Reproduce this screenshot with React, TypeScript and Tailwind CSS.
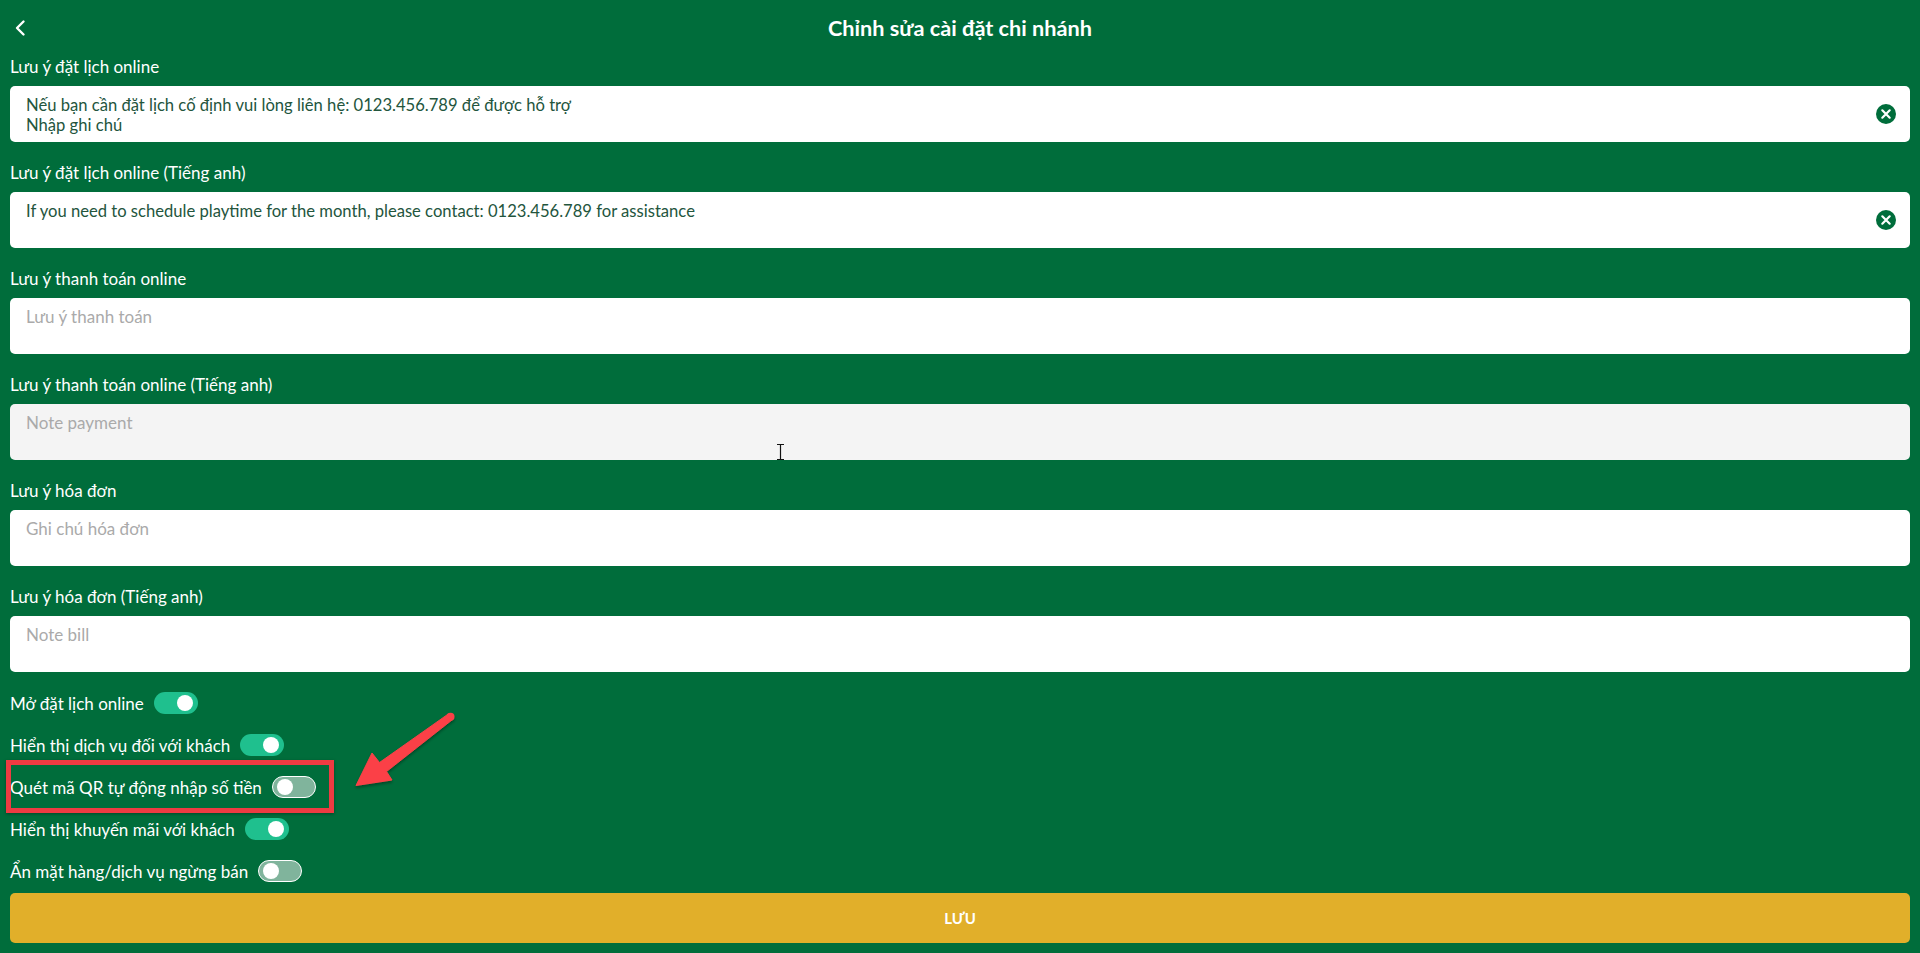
const fields: { label: string; value?: string[]; placeholder?: string; disabled?: boolean }[] = [
  { label: "Lưu ý đặt lịch online", value: ["Nếu bạn cần đặt lịch cố định vui lòng liên hệ: 0123.456.789 để được hỗ trợ", "Nhập ghi chú"] },
  { label: "Lưu ý đặt lịch online (Tiếng anh)", value: ["If you need to schedule playtime for the month, please contact: 0123.456.789 for assistance"] },
  { label: "Lưu ý thanh toán online", placeholder: "Lưu ý thanh toán" },
  { label: "Lưu ý thanh toán online (Tiếng anh)", placeholder: "Note payment", disabled: true },
  { label: "Lưu ý hóa đơn", placeholder: "Ghi chú hóa đơn" },
  { label: "Lưu ý hóa đơn (Tiếng anh)", placeholder: "Note bill" },
];

const toggles = [
  { label: "Mở đặt lịch online", on: true },
  { label: "Hiển thị dịch vụ đối với khách", on: true },
  { label: "Quét mã QR tự động nhập số tiền", on: false },
  { label: "Hiển thị khuyến mãi với khách", on: true },
  { label: "Ẩn mặt hàng/dịch vụ ngừng bán", on: false },
];

function Switch({ on }: { on: boolean }) {
  return on ? (
    <div className="flex h-[22px] w-[44px] shrink-0 items-center justify-end rounded-full bg-[#1fc08e] pr-[5px]">
      <div className="h-[16px] w-[16px] rounded-full bg-white" />
    </div>
  ) : (
    <div className="flex h-[22px] w-[44px] shrink-0 items-center justify-start rounded-full border border-white bg-[#80b49c] pl-[4px]">
      <div className="h-[16px] w-[16px] rounded-full bg-white" />
    </div>
  );
}

function Field({ label, value, placeholder, disabled }: (typeof fields)[number]) {
  return (
    <div className="flex flex-col gap-[10px]">
      <div className="h-[20px] pt-px text-[17px] leading-[20px] text-white">{label}</div>
      <div className={`relative h-[56px] rounded-[5px] px-[16px] pt-[9px] leading-[20px] ${disabled ? "bg-[#f4f4f4]" : "bg-white"}`}>
        {value ? (
          value.map((line) => (
            <div key={line} className="text-[16.600px] text-[#23553d]">{line}</div>
          ))
        ) : (
          <div className="text-[17px] text-[#aaaaaa]">{placeholder}</div>
        )}
        {value && (
          <svg className="absolute right-[14px] top-[18px]" width="20" height="20" viewBox="0 0 20 20">
            <circle cx="10" cy="10" r="10" fill="#006d3b" />
            <path d="M6.300 6.300l7.400 7.400M13.700 6.300l-7.400 7.400" stroke="#fff" strokeWidth="2.200" strokeLinecap="round" />
          </svg>
        )}
      </div>
    </div>
  );
}

export default function App() {
  return (
    <div className="relative h-[953px] w-full overflow-hidden bg-[#006d3b] px-[10px] font-['Lato','Noto_Sans',sans-serif]">
      <header className="relative flex h-[56px] items-center justify-center">
        <svg className="absolute left-[2px] top-[18px]" width="16" height="20" viewBox="0 0 16 20" fill="none">
          <path d="M11.500 3.500L5 10l6.500 6.500" stroke="#fff" strokeWidth="2.400" strokeLinecap="round" strokeLinejoin="round" />
        </svg>
        <h1 className="text-[21.700px] font-bold text-white">Chỉnh sửa cài đặt chi nhánh</h1>
      </header>

      <div className="flex flex-col gap-[20px]">
        {fields.map((f) => (
          <Field key={f.label} {...f} />
        ))}
      </div>

      <div className="mt-[10px] flex flex-col">
        {toggles.map((t) => (
          <div key={t.label} className="flex h-[42px] items-center gap-[10px] text-[17px] text-white">
            <span className="mt-[2px]">{t.label}</span>
            <Switch on={t.on} />
          </div>
        ))}
      </div>

      <button className="mt-px h-[50px] w-full rounded-[5px] bg-[#e1af2a] text-[15px] font-bold text-white">LƯU</button>

      {/* I-beam cursor */}
      <svg className="absolute left-[776px] top-[443px]" width="9" height="18" viewBox="0 0 9 18" fill="none">
        <path d="M1 1.500h7M4.500 1.500v15M1 16.500h7" stroke="#111" strokeWidth="1.200" />
      </svg>

      {/* Annotation box */}
      <div className="pointer-events-none absolute left-[6px] top-[760px] h-[53px] w-[328px] border-[5px] border-[#ee3b42] shadow-[0_1px_3px_rgba(0,0,0,0.35)]" />

      {/* Annotation arrow */}
      <svg className="pointer-events-none absolute left-[340px] top-[700px]" width="130" height="100" viewBox="340 700 130 100" fill="none">
        <defs>
          <filter id="s" x="-20%" y="-20%" width="140%" height="140%">
            <feDropShadow dx="0" dy="2" stdDeviation="1.500" floodColor="#000" floodOpacity="0.350" />
          </filter>
        </defs>
        <g filter="url(#s)">
          <path
            d="M452.600 719.500L386.500 771.500L392 780L356 785.500L372 753L379.500 762.500L448.400 713.900Z"
            fill="#fb4147"
            stroke="#fb4147"
            strokeWidth="1"
            strokeLinejoin="round"
          />
          <circle cx="450.500" cy="716.700" r="4" fill="#fb4147" />
        </g>
      </svg>
    </div>
  );
}
